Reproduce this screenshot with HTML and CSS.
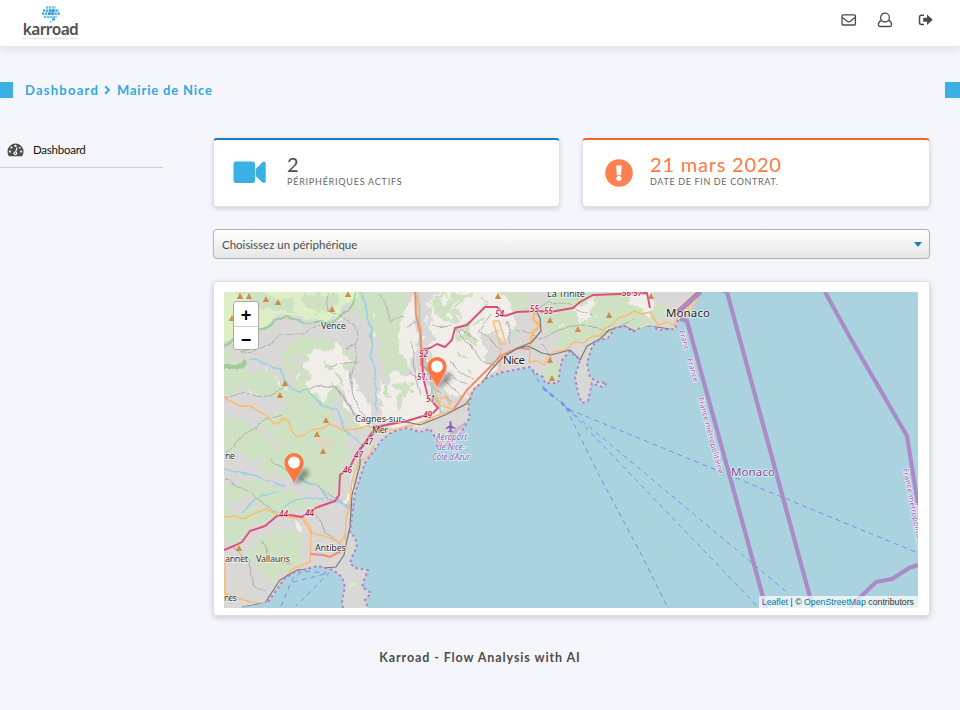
FILE: index.html
```html
<!DOCTYPE html>
<html lang="fr">
<head>
<meta charset="utf-8">
<title>Karroad - Dashboard</title>
<link rel="stylesheet" href="styles.css">
</head>
<body>
<header class="topbar">
  <div class="logo">
    <svg class="logo-mark" viewBox="0 0 20 17" width="20" height="17">
      <g fill="none" stroke-width="2.3" stroke-dasharray="2.3 .8">
        <path stroke="#72c2e8" d="M5 1.5h10"/><path stroke="#32a5dd" d="M2 4.600h16M1 7.700h18"/><path stroke="#62bde7" d="M3 10.800h13"/>
        <path stroke="#2788cf" d="M8.200 4.600h5.400M7.200 7.700h5.400"/>
      </g>
      <path fill="#32a5dd" d="M11 12.300h3v2.200h-3zM9 15.200h1.500v1.300H9z"/>
    </svg>
    <span class="logo-name">karroad</span>
    <svg class="logo-tag" width="57" height="3" viewBox="0 0 57 3"><path d="M0 1.500h56" stroke="#ddd" stroke-width="1.600" stroke-dasharray="1.600 .8"/></svg>
  </div>
  <nav class="actions">
    <svg width="16" height="12" viewBox="0 0 16 12" fill="none" stroke="#4b4b4b" stroke-width="1.3"><rect x="1" y=".8" width="13.400" height="10.200" rx="1"/><path d="M1.200 3.200 6 7.200Q7.700 8.500 9.400 7.200L14.200 3.200"/></svg>
    <svg width="16" height="16" viewBox="0 0 16 16" fill="none" stroke="#4b4b4b" stroke-width="1.3"><circle cx="8" cy="5.600" r="4.400"/><path d="M4.400 8.400C2 9.300 1.400 10.800 1.400 12.800c0 1 .7 1.700 1.700 1.700h9.800c1 0 1.700-.7 1.700-1.700 0-2-.6-3.500-3-4.400"/></svg>
    <svg class="exit" width="16" height="12" viewBox="0 0 16 12"><path d="M6 1.200H3.500Q1.500 1.200 1.500 3.200v5.200q0 2 2 2H6" fill="none" stroke="#4b4b4b" stroke-width="1.500"/><path fill="#4b4b4b" d="M5.200 3.800H9V.6L14.800 5.800 9 11V7.800H5.200z"/></svg>
  </nav>
</header>

<div class="crumbs">
  <span class="block"></span>
  <span class="crumb first">Dashboard</span>
  <svg width="7" height="10" viewBox="0 0 7 10" fill="none" stroke="#32a9e1" stroke-width="1.900"><path d="M1.200 1.300 5 5 1.200 8.700"/></svg>
  <span class="crumb second">Mairie de Nice</span>
  <span class="block right"></span>
</div>

<div class="layout">
  <aside class="sidebar">
    <a class="side-link">
      <svg width="17" height="14" viewBox="0 0 17 14"><path fill="#4e4e4e" d="M8.500.5A8 8 0 0 0 .5 8.600c0 1.600.4 3 1.200 4.300q.2.400.6.400h12.400q.4 0 .6-.4c.8-1.300 1.200-2.700 1.200-4.300a8 8 0 0 0-8-8.100z"/><g fill="#f5f6fb"><circle cx="8.500" cy="2.900" r="1.100"/><circle cx="4.500" cy="4.500" r="1.100"/><circle cx="2.900" cy="8.600" r="1.100"/><circle cx="14.100" cy="8.600" r="1.100"/><circle cx="12.800" cy="4.800" r=".9"/><circle cx="8.300" cy="10.300" r="1.900"/></g><path d="M8.300 10.300 10.100 4.400" stroke="#f5f6fb" stroke-width="1.200"/><circle cx="8.300" cy="10.300" r=".7" fill="#4e4e4e"/></svg>
      <span>Dashboard</span>
    </a>
  </aside>

  <main class="content">
    <section class="stats">
      <article class="card blue">
        <svg class="camera" width="34" height="23" viewBox="0 0 34 23" fill="#3bb0e5"><rect x=".5" y=".6" width="21.500" height="21.500" rx="2.500"/><path d="M22.600 8.200 29.200 1.300Q30.200.4 31.300.7L32.700 1.600V21l-1.400.9q-1.100.3-2.100-.7L22.600 15z"/></svg>
        <div class="card-text"><div class="value two">2</div><div class="label actifs">PÉRIPHÉRIQUES ACTIFS</div></div>
      </article>
      <article class="card orange">
        <svg class="alert" width="28" height="28" viewBox="0 0 28 28"><circle cx="14" cy="14" r="13.800" fill="#ff8050"/><path fill="#fff" d="M11.200 6.500h5.400L16 16.300h-4.200z"/><circle cx="13.900" cy="19.400" r="2.500" fill="#fff"/></svg>
        <div class="card-text"><div class="value date">21 mars 2020</div><div class="label contrat">DATE DE FIN DE CONTRAT.</div></div>
      </article>
    </section>

    <div class="select"><span>Choisissez un périphérique</span><i class="caret"></i></div>

    <section class="map-card">
      <div class="map">
        <svg class="tiles" viewBox="224 292 694 316" width="694" height="316">
          <defs>
            <filter id="rough" x="-5%" y="-5%" width="110%" height="110%"><feTurbulence type="fractalNoise" baseFrequency=".07" numOctaves="4" seed="8"/><feDisplacementMap in="SourceGraphic" scale="24" xChannelSelector="R" yChannelSelector="G"/></filter>
            <filter id="wavy" x="-5%" y="-5%" width="110%" height="110%"><feTurbulence type="fractalNoise" baseFrequency=".06" numOctaves="2" seed="3"/><feDisplacementMap in="SourceGraphic" scale="9" xChannelSelector="R" yChannelSelector="G"/></filter>
            <filter id="soft" x="-50%" y="-50%" width="200%" height="200%"><feGaussianBlur stdDeviation="2"/></filter>
            <path id="land" d="M224 292H701L698 300 687 315 678 320 675 329 658 330 653 326 640 328 633 332 625 326 615 328 608 338 597 341 592 347 587 363 590 377 597 382 607 383 602 387 592 383 588 401 582 403 578 393 575 377 580 360 570 351 562 360 560 370 558 383 545 383 543 377 535 373 530 367 503 372 487 378 473 390 468 407 470 417 457 440 450 444 437 447 437 440 430 429 420 432 407 428 392 432 382 440 365 463 360 477 355 493 352 517 350 533 355 537 357 547 352 557 350 563 355 568 368 570 364 580 362 587 371 593 365 600 368 608H343L342 600 345 587 342 577 333 570 318 566 295 572 285 578 273 595 268 602 255 605 242 607 238 608H224z"/>
            <clipPath id="landclip"><use href="#land"/></clipPath>
            <path id="peak" d="M-3.200 3 0-3 3.200 3z"/>
          </defs>
          <rect x="224" y="292" width="694" height="316" fill="#abd3df"/>
          <use href="#land" fill="#d9d8d7"/>
          <g clip-path="url(#landclip)">
            <g filter="url(#rough)">
              <path fill="#cee2c3" d="M290 340 325 336 350 352 350 385 335 400 330 420 352 440 352 462 330 470 300 462 280 440 262 418 290 410 275 388 295 380 280 365zM215 372 245 365 268 375 285 395 262 398 240 385 215 395z"/>
              <path fill="#cee2c3" d="M345 285H408L404 320 410 362 398 378 384 375 380 338 362 322zM345 395 365 390 370 430 345 425zM215 418 250 425 275 445 300 450 345 470 335 500 300 478 260 472 240 460 215 440z"/>
              <path fill="#dcefc5" d="M215 280H362L352 300 340 316 322 320 300 318 285 314 262 328 240 336 215 350z"/>
              <path fill="#cee2c3" d="M232 285 285 296 300 312 275 312 245 300zM300 300 330 294 338 308 318 316zM215 352 238 352 228 366 215 370zM215 480 262 484 300 494 318 506 288 512 262 520 242 540 215 545zM240 552 275 530 300 535 305 556 290 568 270 583 258 566z"/>
              <path fill="#d9d8d7" d="M232 450 262 460 260 470 232 462zM292 352 312 360 300 372zM222 500 250 498 262 508 240 512z"/>
              <path fill="#f1eee9" d="M311 352 340 348 352 376 364 395 376 425 358 422 340 390 322 398 306 385zM376 378 388 384 400 372 422 372 440 415 398 430 382 412zM432 288H500L516 328 498 353 492 381 470 398 446 395 429 357zM398 340 408 300 416 292 418 340 412 370zM350 480 358 470 352 500 346 510zM290 520 303 524 302 534 294 532z"/>
              <path fill="#d9d8d7" d="M478 335 500 330 506 356 486 362zM512 325 528 318 538 340 520 350z"/>
              <path fill="#cee2c3" d="M395 384 409 380 404 408 396 411zM434 293H470L458 316 442 326 434 316zM452 327 467 324 474 345 455 341zM500 290H530L528 306 508 312zM542 292H638L672 315 646 327 599 335 570 348 548 336 544 318zM547 364 560 364 558 384 546 379z"/>
              <path fill="#f1eee9" d="M575 303 595 300 591 320 578 321zM625 290 652 290 652 315 636 306z"/>
              <path fill="#ded6bf" d="M312 440 330 436 326 452 315 448z"/>
              <path fill="#d9ead1" d="M347 583 354 579 357 586 349 590z"/>
              <path fill="none" stroke="#f1eee9" stroke-width="4" stroke-dasharray="8 6" d="M440 300 452 292M444 316 462 300M456 334 468 332"/>
              <path fill="none" stroke="#c5dfb8" stroke-width="4" stroke-dasharray="10 7" d="M328 364 337 380 350 391M385 385 390 402M412 385 410 398M460 352 470 376M484 300 478 324"/>
              <path fill="none" stroke="#e8efd9" stroke-width="3" stroke-dasharray="6 14" d="M262 370 280 385 310 365M230 390 267 399M373 315 374 350M400 320 407 350M560 330 600 318"/>
            </g>
            <g fill="#bfe6c8"><circle cx="311" cy="344" r="2"/><circle cx="311" cy="435" r="2.500"/><circle cx="492" cy="363" r="3"/><circle cx="515" cy="334" r="2.500"/><circle cx="581" cy="376" r="2.500"/><circle cx="372" cy="445" r="3"/><circle cx="280" cy="492" r="2.500"/></g>
            <g fill="none" stroke="#9ecd9b" stroke-width="2.200" stroke-linejoin="round" filter="url(#wavy)">
              <path stroke-width="4" d="M222 367H235L247 362"/><path d="M222 347 244 335 260 331 273 322 286 317 300 321 308 323 319 320 333 323 342 317 354 305 358 292M243 353 258 344"/>
            </g>
            <g fill="none" stroke="#a9a9ac" stroke-width=".9" stroke-linejoin="round" filter="url(#wavy)">
              <path d="M224 400 245 392 264 397 286 385M298 391 321 384 338 387 350 409 374 425 387 430M330 382 342 392 354 415 370 428M245 356 266 345 279 335 303 334 324 323M326 294 329 309 341 318 354 325 359 340 347 350M331 367 341 363 359 362M357 343 354 365 350 385 356 404 368 420M379 293 389 309 389 324 404 315M224 458 236 443 260 422 282 415M271 460 293 476 322 488 339 501 352 510M224 480 240 486 270 508 280 514M233 548 248 560 254 585 266 589M262 540 270 556 290 562M316 515 324 532 345 546M405 327 420 319M409 372 425 381 451 401M430 327 450 324 472 346 478 359 494 367M460 330 477 338M493 313 479 331 503 350M515 329 544 338 570 326 610 330 635 320M535 309 550 302 568 304 592 315M446 372 470 386M450 364 476 380M444 380 462 396M412 340 414 370 420 396M426 350 428 376 436 398M506 320 512 345M540 345 556 362"/>
            </g>
            <g fill="none" stroke="#98cfe3" stroke-width="1.500" stroke-linejoin="round" filter="url(#wavy)"><path d="M362 292 369 325 370 343 373 370 376 398 378 413M251 361 280 367 285 382 299 391 305 388 322 405 336 411 345 430 356 439 366 447M224 470 252 475 270 480 285 486M240 512 260 495 276 493M282 510 290 500 311 499 326 497M299 480 319 486 330 499 352 507"/><path stroke-width="3" d="M416 292 420 318 423 350 428 370 439 413"/></g>
            <g fill="none" stroke="#f9bc72" stroke-width="1.500" stroke-linejoin="round" stroke-linecap="round">
              <path d="M224 398 232 402 239 406 250 406 258 411 266 415 274 424 279 423 282 418 289 421 291 430 297 437 304 435 311 430 323 428 330 424 344 430 356 429 367 426 390 430 410 426 425 421 438 415 448 412 463 406 469 399 474 389 485 380 499 375 529 369M224 517 235 516 244 519 255 513 267 509 281 517 303 518 310 526 312 533 328 537 340 542 345 536M302 518 311 533 310 562 292 569 280 585 272 600 264 604 250 602 239 598 224 593M225 560V598M418 292 420 325 422 355 431 371 435 390 439 405 453 409M345 540 346 520 350 500 352 480 358 463 370 455 374 446M493 321H499L506 344H500L493 321M500 350V372M530 351 529 362 538 361 544 365 548 356 554 352 566 350 574 342 583 343 592 336 600 336 605 328 610 326 620 317 626 316 634 311 642 314 650 312 658 325 668 322 674 326 679 314M687 315 690 302 693 307 701 293M438 408 441 398 446 397 450 405"/>
              <path stroke-width="3" d="M536 307 533 319 540 326 532 333 531 344"/>
            </g>
            <g fill="none" stroke="#f58b70" stroke-width="2"><path d="M415 292 416 315 421 337 421 365 435 375M310 554 323 555 330 557 345 549M454 409 467 390 480 377 491 366 500 356 518 348 530 349"/></g>
            <path fill="none" stroke="#777579" stroke-width="1.200" stroke-linejoin="round" d="M242 607 265 603 280 580 297 570 336 567 344 555 347 540 350 527 352 495 360 465 360 450 378 428 391 423 407 422 420 425 445 415 466 404 480 386 491 370 503 357 518 348 532 342 541 331 540 318 536 311M519 348 528 346 542 353 551 355 570 350 580 360 587 346 600 339 609 330 624 326 635 331 650 326 670 329"/>
            <path fill="none" stroke="#dc4f7b" stroke-width="1.900" stroke-linejoin="round" d="M224 550 236 545 242 542 250 531 265 526 277 516 290 515 302 517 310 511 318 507 335 501 339 495 340 475 350 467 357 453 368 438 376 427 407 421 433 413 438 408 428 397 423 377 422 350 430 348 437 344 445 347 452 340 455 328 467 325 485 307 497 307 505 316 517 312 537 311 550 312 573 308 580 302 593 295 647 293 650 308"/>
            <path stroke="#c7b8cd" stroke-width="3" d="M438 444 466 423M445 447 460 426"/>
            <path fill="none" stroke="#cc6c70" stroke-width="5" d="M678 312 701 291"/>
          </g>
          <path fill="none" stroke="#b07fc4" stroke-width="2" stroke-dasharray="2.500 3" d="M678 320 675 329 658 330 653 326M640 328 633 332 625 326 615 328 608 338 597 341 592 347 587 363 590 377 597 382 607 383 602 387 592 383 588 401 582 403 578 393 575 377 580 360 570 351 562 360 560 370 558 383 545 383 543 377 535 373 530 367 503 372 487 378 473 390 468 407 470 417 457 440M437 447 437 440 430 429 420 432 407 428 392 432 382 440 365 463 355 493 352 517 350 533 355 537 357 547 352 557 350 563 355 568 368 570 364 580 362 587 371 593 365 600 368 608M343 608 342 600 345 587 342 577 333 570 318 566 295 572 285 578 273 595 268 602"/>
          <g fill="none" stroke="#7890ec" stroke-width="1" stroke-dasharray="5 4"><path d="M532 371 542 386 568 409 918 553M568 409 788 593M566 407 758 607M566 408 600 477 640 552 667 606M281 606 293 578 303 571 327 573M293 582 329 573 296 606"/><path stroke-width="2.500" d="M543 388 554 397M561 402 570 411"/></g>
          <g fill="none" stroke="#a98bc8" stroke-width="4.200" stroke-linejoin="round"><path d="M680 319 687 321 766 608M701 292 680 310M721 290 727 292 813 608M825 292 852 341 907 436 918 505M850 607 876 582 892 579 909 568 918 565"/></g>
          <g fill="#d08a4e"><use href="#peak" x="240" y="296"/><use href="#peak" x="249" y="296"/><use href="#peak" x="266" y="299"/><use href="#peak" x="278" y="302"/><use href="#peak" x="348" y="294"/><use href="#peak" x="332" y="309"/><use href="#peak" x="232" y="318"/><use href="#peak" x="285" y="383"/><use href="#peak" x="280" y="395"/><use href="#peak" x="326" y="420"/><use href="#peak" x="317" y="434"/><use href="#peak" x="323" y="451"/><use href="#peak" x="239" y="548"/><use href="#peak" x="498" y="296"/><use href="#peak" x="550" y="320"/><use href="#peak" x="550" y="360"/><use href="#peak" x="552" y="378"/><use href="#peak" x="578" y="329"/><use href="#peak" x="609" y="315"/><use href="#peak" x="651" y="296"/></g>
          <g class="towns"><text x="321" y="329" textLength="25">Vence</text><text x="355" y="421.500" textLength="50">Cagnes-sur-</text><text x="372" y="433" textLength="16">Mer</text><text x="315" y="550.500" textLength="31">Antibes</text><text x="256" y="561.500" textLength="34">Vallauris</text><text x="225" y="561.500" textLength="23">annet</text><text x="225" y="459" textLength="10">ne</text><text x="224" y="601" textLength="13">nes</text><text x="547" y="296.500" textLength="38">La Trinité</text></g>
          <g class="cities"><text x="503" y="364" textLength="22">Nice</text><text x="666" y="317" textLength="44">Monaco</text></g>
          <text class="country" x="731" y="476" textLength="44">Monaco</text>
          <g class="exits"><text x="419" y="357">52</text><text x="417" y="380">51.1</text><text x="426" y="402">51</text><text x="423" y="418">49</text><text x="364" y="445">47</text><text x="354" y="458">47</text><text x="343" y="473">46</text><text x="279" y="517">44</text><text x="305" y="516">44</text><text x="495" y="317">54</text><text x="530" y="312">55</text><text x="544" y="314">55</text><text x="622" y="296">56·57</text></g>
          <path fill="#8461b7" d="M450.500 421q1 0 1 1.500v3l4 2.500v1l-4-1v2.500l1.500 1v.8l-2.500-.6-2.500.6v-.8l1.500-1V428l-4 1v-1l4-2.500v-3q0-1.500 1-1.500z"/>
          <g class="airport"><text x="436" y="440" textLength="31">Aéroport</text><text x="437" y="450" textLength="28">de Nice-</text><text x="432" y="459.500" textLength="38">Côte d'Azur</text></g>
          <g class="borders"><text transform="translate(679 331) rotate(74)">Franc</text><text transform="translate(687 359) rotate(74)">France</text><text transform="translate(698 398) rotate(75)" textLength="79">France métropolitaine</text><text transform="translate(903 469) rotate(79)" textLength="82">France métropolitaine</text></g>
          <g transform="translate(437 388)"><path d="M0 0 7-13 13-16 15-10 8-3z" fill="#222" opacity=".45" filter="url(#soft)"/><path fill="#ff7740" d="M0-1C-3-9-9.500-14-9.500-21.500a9.500 9.500 0 0 1 19 0C9.500-14 3-9 0-1z"/><circle cy="-21.500" r="5.900" fill="#fff"/></g>
          <g transform="translate(294 484)"><path d="M0 0 7-13 13-16 15-10 8-3z" fill="#222" opacity=".45" filter="url(#soft)"/><path fill="#ff7740" d="M0-1C-3-9-9.500-14-9.500-21.500a9.500 9.500 0 0 1 19 0C9.500-14 3-9 0-1z"/><circle cy="-21.500" r="5.900" fill="#fff"/></g>
        </svg>
        <div class="zoom"><b>+</b><b>−</b></div>
        <div class="credit"><a>Leaflet</a> | © <a>OpenStreetMap</a> contributors</div>
      </div>
    </section>
  </main>
</div>
<footer><span>Karroad - Flow Analysis with AI</span></footer>
</body>
</html>
```
FILE: styles.css
```css
* { box-sizing: border-box; }
body { margin: 0; width: 960px; height: 710px; overflow: hidden; background: #f5f6fb; font-family: Lato, sans-serif; color: #4d4d4d; display: flex; flex-direction: column; }
svg { display: block; flex: none; }
.topbar { height: 46px; flex: none; background: #fff; display: flex; justify-content: space-between; box-shadow: 0 3px 10px #00000018; padding: 6px 26px 0 22px; }
.logo { display: flex; flex-direction: column; align-items: center; width: 57px; }
.logo-name { font: 600 15.5px/16px "Noto Sans", sans-serif; color: #505050; letter-spacing: -.6px; margin-top: -2px; white-space: nowrap; }
.actions { display: flex; align-items: center; height: 27px; gap: 20px; }
.actions .exit { margin-left: 5px; }
.crumbs { display: flex; align-items: center; height: 16px; margin-top: 36px; flex: none; color: #32a9e1; font-weight: 700; font-size: 13px; white-space: nowrap; }
.block { width: 13px; height: 16px; background: #3bb0e5; flex: none; }
.block.right { width: 15px; margin-left: auto; }
.crumb { line-height: 16px; }
.first { margin: 0 4px 0 12px; width: 75px; letter-spacing: 1.25px; }
.second { margin-left: 6px; letter-spacing: .83px; }
.layout { display: flex; margin-top: 40px; flex: none; }
.sidebar { width: 213px; flex: none; }
.side-link { display: flex; align-items: center; width: 163px; height: 30px; border-bottom: 1px solid #d0d0d3; padding: 0 0 6px 7px; gap: 9px; color: #111; font-size: 11.5px; letter-spacing: -.25px; }
.content { width: 717px; }
.stats { display: grid; grid-template-columns: 347px 348px; gap: 22px; }
.card { display: flex; height: 69px; background: #fff; border: 1px solid #dfe0e4; border-top: 2px solid #1d7dc4; border-radius: 4px; box-shadow: 0 2px 5px #00000026; padding-left: 19px; }
.orange { border-top-color: #f2622e; padding-left: 22px; }
.camera { margin-top: 21px; }
.alert { margin-top: 19px; }
.card-text { margin: 11px 0 0 20px; white-space: nowrap; }
.orange .card-text { margin-left: 17px; }
.value { font-size: 20px; line-height: 26px; }
.date { color: #ff7842; letter-spacing: .8px; }
.label { font-size: 9px; line-height: 10px; color: #666; }
.actifs { letter-spacing: .77px; }
.contrat { letter-spacing: .65px; }
.select { margin-top: 22px; height: 30px; border: 1px solid #b4b6b5; border-radius: 4px; background: linear-gradient(#fff, #e6e6e6); box-shadow: 0 0 1px #b4b6b5; display: flex; align-items: center; justify-content: space-between; padding: 0 7px 0 8px; font-size: 11.5px; }
.caret { border: 4px solid transparent; border-top: 5px solid #1680b6; border-bottom: 0; }
.map-card { margin-top: 22px; height: 335px; background: #fff; border: 1px solid #dfe0e4; border-radius: 4px; box-shadow: 0 2px 6px #0000002e; padding: 10px; }
.map { position: relative; width: 694px; height: 316px; overflow: hidden; }
.tiles { font-family: "Noto Sans", sans-serif; }
.tiles text { paint-order: stroke; stroke: #ffffffb0; stroke-width: 1.6px; stroke-linejoin: round; }
.towns { font-size: 9.2px; fill: #333; }
.cities { font-size: 11.5px; fill: #222; }
.country { font-size: 11.5px; fill: #80488f; }
.exits { font-size: 8.2px; font-style: italic; font-weight: 500; fill: #b31b46; }
.airport { font-size: 8.3px; font-style: italic; fill: #8461b7; }
.borders { font-size: 7.8px; fill: #aa58b4; }
.zoom { position: absolute; left: 9px; top: 9px; width: 26px; height: 49px; border: 1px solid #aaa; border-radius: 3px; background: #fff; display: flex; flex-direction: column; overflow: hidden; }
.zoom b { height: 24px; text-align: center; color: #000; font: 700 18px/27px "Liberation Sans", sans-serif; }
.zoom b + b { border-top: 1px solid #ccc; }
.credit { position: absolute; right: 0; bottom: 0; height: 12px; padding: 0 4px 0 3px; background: #ffffffb3; font: 8.75px/12px "Liberation Sans", sans-serif; color: #333; white-space: nowrap; }
.credit a { color: #0078a8; }
footer { margin-top: 33px; display: flex; justify-content: center; font-size: 12.5px; font-weight: 700; line-height: 18px; letter-spacing: .9px; white-space: nowrap; }
```
